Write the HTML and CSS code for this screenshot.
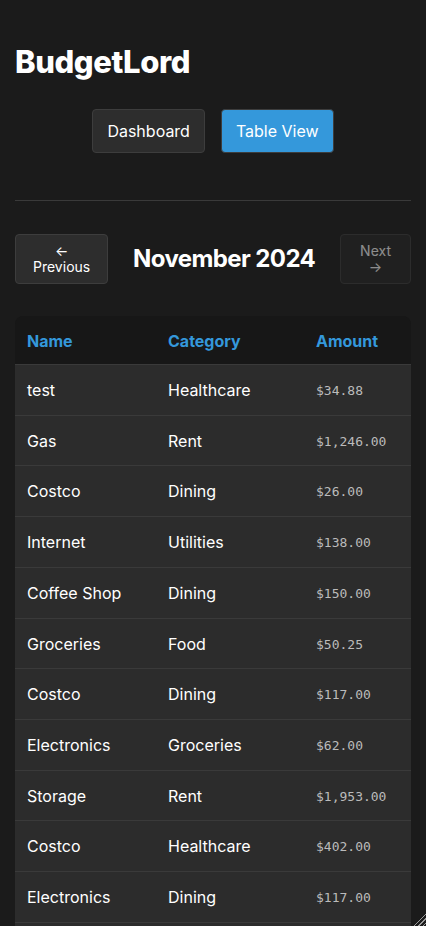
FILE: index.html
```html
<!DOCTYPE html>
<html lang="en">
<head>
<meta charset="utf-8">
<title>BudgetLord</title>
<link rel="stylesheet" href="styles.css">
</head>
<body>
<div class="app">
  <h1 class="title">BudgetLord</h1>
  <div class="tabs">
    <button class="tab">Dashboard</button>
    <button class="tab active">Table View</button>
  </div>
  <hr class="divider">
  <div class="month-nav">
    <button class="nav-btn prev">← <br>Previous</button>
    <h2 class="month">November 2024</h2>
    <button class="nav-btn next" disabled>Next<br>→</button>
  </div>
  <div class="table-wrap">
    <table class="tx">
      <colgroup><col class="c1"><col class="c2"><col class="c3"></colgroup>
      <thead>
        <tr><th>Name</th><th>Category</th><th>Amount</th></tr>
      </thead>
      <tbody>
        <tr><td>test</td><td>Healthcare</td><td class="amt">$34.88</td></tr>
        <tr><td>Gas</td><td>Rent</td><td class="amt">$1,246.00</td></tr>
        <tr><td>Costco</td><td>Dining</td><td class="amt">$26.00</td></tr>
        <tr><td>Internet</td><td>Utilities</td><td class="amt">$138.00</td></tr>
        <tr><td>Coffee Shop</td><td>Dining</td><td class="amt">$150.00</td></tr>
        <tr><td>Groceries</td><td>Food</td><td class="amt">$50.25</td></tr>
        <tr><td>Costco</td><td>Dining</td><td class="amt">$117.00</td></tr>
        <tr><td>Electronics</td><td>Groceries</td><td class="amt">$62.00</td></tr>
        <tr><td>Storage</td><td>Rent</td><td class="amt">$1,953.00</td></tr>
        <tr><td>Costco</td><td>Healthcare</td><td class="amt">$402.00</td></tr>
        <tr><td>Electronics</td><td>Dining</td><td class="amt">$117.00</td></tr>
      </tbody>
    </table>
    <div class="table-tail"></div>
  </div>
</div>
<div class="resize-corner"></div>
</body>
</html>
```
FILE: styles.css
```css
html, body {
  margin: 0;
  padding: 0;
  background: #1b1b1b;
  color: #ffffff;
  font-family: Inter, "Noto Sans", "Liberation Sans", sans-serif;
}

.app {
  padding: 44px 15px 0 15px;
}

.title {
  margin: 0;
  font-size: 31px;
  line-height: 36px;
  font-weight: 800;
  letter-spacing: -0.4px;
}

.tabs {
  display: flex;
  justify-content: center;
  gap: 16px;
  margin-top: 29px;
}

.tab {
  font-family: inherit;
  font-size: 16px;
  line-height: 20px;
  padding: 11px 14px;
  background: #2d2d2d;
  color: #ffffff;
  border: 1px solid #3d3d3d;
  border-radius: 4px;
}

.tab.active {
  background: #3498db;
}

.divider {
  border: 0;
  border-top: 1px solid #3a3a3a;
  margin: 47px 0 0 0;
}

.month-nav {
  display: flex;
  justify-content: space-between;
  align-items: center;
  margin-top: 33px;
}

.nav-btn {
  font-family: inherit;
  font-size: 14px;
  line-height: 16px;
  padding: 8px 17px;
  background: #2d2d2d;
  color: #ffffff;
  border: 1px solid #3d3d3d;
  border-radius: 4px;
  height: 50px;
}

.nav-btn.next {
  padding: 8px 19px;
  opacity: 0.5;
  background: #262626;
}

.month {
  margin: 0;
  font-size: 24px;
  line-height: 30px;
  font-weight: 700;
  letter-spacing: -0.6px;
}

.table-wrap {
  margin-top: 32px;
  border-radius: 8px;
  overflow: hidden;
}

.tx {
  width: 396px;
  border-collapse: collapse;
  table-layout: fixed;
}

.c1 { width: 141px; }
.c2 { width: 148px; }
.c3 { width: 107px; }

.tx th {
  text-align: left;
  color: #3498db;
  background: #171717;
  font-size: 16px;
  font-weight: 700;
  line-height: 20px;
  padding: 15px 12px 13px 12px;
  border-bottom: 1px solid #3a3a3a;
}

.tx td {
  background: #2c2c2c;
  font-size: 16px;
  line-height: 17.7px;
  padding: 17px 12px 15px 12px;
  border-bottom: 1px solid #3a3a3a;
  white-space: nowrap;
}

.tx td.amt {
  font-family: "DejaVu Sans Mono", "Liberation Mono", monospace;
  font-size: 13px;
  color: #bbbbbb;
}

.table-tail {
  height: 20px;
  background: #2c2c2c;
}

.resize-corner {
  position: fixed;
  right: 0;
  bottom: 0;
  width: 14px;
  height: 14px;
  background: repeating-linear-gradient(135deg, transparent 0 2px, #9a9a9a 2px 3px);
  clip-path: polygon(100% 0, 100% 100%, 0 100%);
}
```
